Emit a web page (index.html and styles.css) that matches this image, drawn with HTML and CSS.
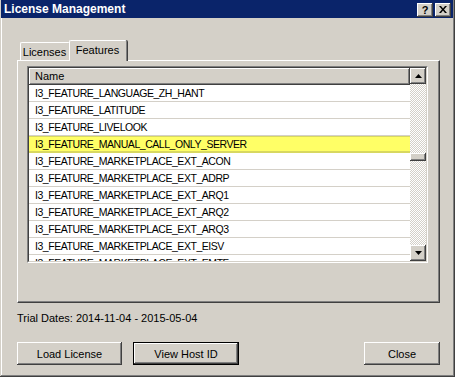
FILE: index.html
```html
<!DOCTYPE html>
<html lang="en">
<head>
    <meta charset="UTF-8">
    <title>License Management</title>
    <link rel="stylesheet" href="styles.css">
</head>
<body>
    <div class="window">
        <div class="titlebar">
            <span class="title">License Management</span>
            <div class="title-buttons">
                <button class="title-btn help">?</button>
                <button class="title-btn close-x">
                    <svg width="8" height="7" viewBox="0 0 8 7">
                        <path d="M0 0h2l2 2.5 2-2.5h2l-3 3.5 3 3.5h-2l-2-2.5-2 2.5h-2l3-3.5z" fill="#000"/>
                    </svg>
                </button>
            </div>
        </div>

        <div class="content">
            <div class="tabs">
                <div class="tab">Licenses</div>
                <div class="tab active">Features</div>
            </div>
            <div class="panel">
                <div class="list">
                    <div class="list-inner">
                        <div class="list-main">
                            <div class="list-header">Name</div>
                            <div class="row">I3_FEATURE_LANGUAGE_ZH_HANT</div>
                            <div class="row">I3_FEATURE_LATITUDE</div>
                            <div class="row">I3_FEATURE_LIVELOOK</div>
                            <div class="row highlight">I3_FEATURE_MANUAL_CALL_ONLY_SERVER</div>
                            <div class="row">I3_FEATURE_MARKETPLACE_EXT_ACON</div>
                            <div class="row">I3_FEATURE_MARKETPLACE_EXT_ADRP</div>
                            <div class="row">I3_FEATURE_MARKETPLACE_EXT_ARQ1</div>
                            <div class="row">I3_FEATURE_MARKETPLACE_EXT_ARQ2</div>
                            <div class="row">I3_FEATURE_MARKETPLACE_EXT_ARQ3</div>
                            <div class="row">I3_FEATURE_MARKETPLACE_EXT_EISV</div>
                            <div class="row">I3_FEATURE_MARKETPLACE_EXT_EMTF</div>
                        </div>
                        <div class="scrollbar">
                            <div class="scroll-btn">
                                <svg width="7" height="4" viewBox="0 0 7 4"><path d="M3.5 0L7 4H0z" fill="#000"/></svg>
                            </div>
                            <div class="track">
                                <div class="thumb"></div>
                            </div>
                            <div class="scroll-btn">
                                <svg width="7" height="4" viewBox="0 0 7 4"><path d="M0 0h7L3.5 4z" fill="#000"/></svg>
                            </div>
                        </div>
                    </div>
                </div>
            </div>

            <div class="trial">Trial Dates: 2014-11-04 - 2015-05-04</div>

            <div class="actions">
                <button class="btn load-btn">Load License</button>
                <button class="btn default host-btn">View Host ID</button>
                <div class="spacer"></div>
                <button class="btn close-btn">Close</button>
            </div>
        </div>
    </div>
</body>
</html>
```

FILE: styles.css
```css
body {
    margin: 0;
    font-family: "Liberation Sans", Arial, sans-serif;
    font-size: 11px;
    color: #000;
    background: #d4d0c8;
}
.window {
    width: 455px;
    height: 377px;
    box-sizing: border-box;
    background: #d4d0c8;
    padding: 0 2px 2px 1px;
    box-shadow: inset -1px -1px #404040, inset 1px 0 #d4d0c8, inset -2px -2px #808080, inset 2px 0 #fff;
    display: flex;
    flex-direction: column;
}
.titlebar {
    height: 18px;
    background: #0a246a;
    color: #fff;
    display: flex;
    align-items: center;
    justify-content: space-between;
    padding: 0 2px 0 3px;
}
.title {
    font-weight: bold;
    font-size: 12px;
}
.title-buttons {
    display: flex;
    gap: 2px;
    margin-top: 1px;
}
.title-btn {
    width: 16px;
    height: 14px;
    padding: 0;
    border: none;
    background: #d4d0c8;
    box-shadow: inset -1px -1px #404040, inset 1px 1px #fff, inset -2px -2px #808080;
    display: flex;
    align-items: center;
    justify-content: center;
    font-family: "Liberation Sans", Arial, sans-serif;
    font-weight: bold;
    font-size: 11px;
    line-height: 14px;
    color: #000;
}
.content {
    padding: 22px 13px 0 16px;
}
.tabs {
    display: flex;
    align-items: flex-end;
    height: 20px;
    padding-left: 3px;
}
.tab {
    height: 18px;
    width: 50px;
    box-sizing: border-box;
    border-top: 1px solid #fff;
    border-left: 1px solid #fff;
    border-right: 1px solid #808080;
    box-shadow: 1px 0 #404040;
    border-radius: 2px 2px 0 0;
    text-align: center;
    line-height: 18px;
    padding-right: 1px;
}
.tab.active {
    height: 21px;
    width: 58px;
    margin-left: -1px;
    margin-bottom: -1px;
    background: #d4d0c8;
    position: relative;
    z-index: 1;
    line-height: 18px;
}
.panel {
    height: 243px;
    box-sizing: border-box;
    border-top: 1px solid #fff;
    border-left: 1px solid #fff;
    border-right: 1px solid #404040;
    border-bottom: 1px solid #404040;
    box-shadow: inset -1px -1px #808080;
    padding: 5px 11px 0 9px;
}
.list {
    height: 197px;
    box-sizing: border-box;
    border-top: 1px solid #808080;
    border-left: 1px solid #808080;
    border-right: 1px solid #fff;
    border-bottom: 1px solid #fff;
}
.list-inner {
    height: 100%;
    box-sizing: border-box;
    border-top: 1px solid #404040;
    border-left: 1px solid #404040;
    border-right: 1px solid #d4d0c8;
    border-bottom: 1px solid #d4d0c8;
    display: flex;
    background: #fff;
}
.list-main {
    flex: 1;
    overflow: hidden;
}
.list-header {
    height: 17px;
    box-sizing: border-box;
    background: #d4d0c8;
    box-shadow: inset -1px -1px #404040, inset 1px 1px #fff, inset -2px -2px #808080;
    line-height: 16px;
    padding-left: 6px;
}
.row {
    height: 17px;
    box-sizing: border-box;
    border-bottom: 1px solid #d4d0c8;
    line-height: 16px;
    padding-left: 6px;
    font-size: 10.5px;
    letter-spacing: -0.45px;
    white-space: nowrap;
}
.row.highlight {
    background: #ffff66;
    box-shadow: inset 0 1px #d8d860, inset 0 -1px #d8d860;
    border-bottom-color: #d8d860;
}
.scrollbar {
    width: 16px;
    display: flex;
    flex-direction: column;
}
.scroll-btn {
    height: 16px;
    background: #d4d0c8;
    box-shadow: inset -1px -1px #404040, inset 1px 1px #fff, inset -2px -2px #808080;
    display: flex;
    align-items: center;
    justify-content: center;
}
.track {
    flex: 1;
    background: repeating-conic-gradient(#d4d0c8 0 25%, #fff 0 50%) 0 0 / 2px 2px;
    padding-top: 69px;
}
.thumb {
    height: 8px;
    background: #d4d0c8;
    box-shadow: inset -1px -1px #404040, inset 1px 1px #fff, inset -2px -2px #808080;
}
.trial {
    margin-top: 9px;
    height: 13px;
    line-height: 13px;
}
.actions {
    display: flex;
    margin-top: 17px;
    gap: 11px;
}
.spacer {
    flex: 1;
}
.btn {
    height: 23px;
    padding: 0;
    border: none;
    background: #d4d0c8;
    box-shadow: inset -1px -1px #404040, inset 1px 1px #fff, inset -2px -2px #808080;
    font-family: "Liberation Sans", Arial, sans-serif;
    font-size: 11px;
    color: #000;
}
.btn.default {
    border: 1px solid #000;
}
.load-btn {
    width: 105px;
}
.host-btn {
    width: 106px;
}
.close-btn {
    width: 76px;
}
```
